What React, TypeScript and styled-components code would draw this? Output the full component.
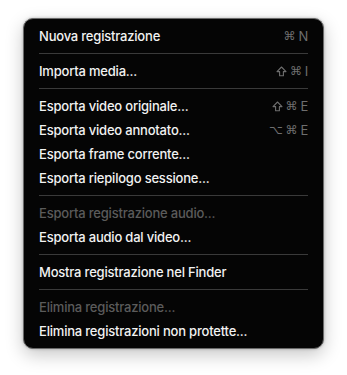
import React from "react";
import styled, { createGlobalStyle } from "styled-components";

const Global = createGlobalStyle`
  html, body { margin: 0; padding: 0; background: #ffffff; }
  body { font-family: Inter, "Noto Sans", "DejaVu Sans", sans-serif; -webkit-font-smoothing: antialiased; }
`;

const Page = styled.div`
  width: 347px;
  height: 375px;
  padding: 18px 0 0 23px;
  box-sizing: border-box;
`;

const Menu = styled.div`
  width: 301px;
  box-sizing: border-box;
  background: #050505;
  border: 1px solid #6a6a6a;
  border-radius: 10px;
  padding: 5px 0;
  box-shadow: 0 6px 18px rgba(0, 0, 0, 0.22), 0 0 3px rgba(0, 0, 0, 0.25);
  display: flex;
  flex-direction: column;
`;

const Row = styled.div<{ $disabled?: boolean }>`
  height: 24px;
  display: flex;
  align-items: center;
  justify-content: space-between;
  padding: 0 15px 0 15px;
  font-size: 13px;
  font-weight: 500;
  letter-spacing: -0.2px;
  color: ${(p) => (p.$disabled ? "#5b5b5b" : "#f2f2f2")};
`;

const Shortcut = styled.span`
  color: #6e6e6e;
  font-size: 13px;
  font-weight: 400;
  display: flex;
  gap: 3px;
  align-items: center;
`;

const Glyph = styled.span`
  font-family: "DejaVu Sans", sans-serif;
  font-size: 12px;
`;

const Sep = styled.div`
  height: 11px;
  display: flex;
  align-items: center;
  padding: 0 15px;
  &::after {
    content: "";
    flex: 1;
    height: 1px;
    background: #3a3a3a;
  }
`;

const ShiftIcon = () => (
  <svg width="11" height="11" viewBox="0 0 11 11" fill="none">
    <path
      d="M5.5 1 L10 5.6 H7.4 V9.8 H3.6 V5.6 H1 Z"
      stroke="#6e6e6e"
      strokeWidth="1.1"
      strokeLinejoin="round"
    />
  </svg>
);

type Item =
  | { sep: true }
  | { label: string; keys?: string[]; disabled?: boolean };

const items: Item[] = [
  { label: "Nuova registrazione", keys: ["⌘", "N"] },
  { sep: true },
  { label: "Importa media...", keys: ["⇧", "⌘", "I"] },
  { sep: true },
  { label: "Esporta video originale...", keys: ["⇧", "⌘", "E"] },
  { label: "Esporta video annotato...", keys: ["⌥", "⌘", "E"] },
  { label: "Esporta frame corrente..." },
  { label: "Esporta riepilogo sessione..." },
  { sep: true },
  { label: "Esporta registrazione audio...", disabled: true },
  { label: "Esporta audio dal video..." },
  { sep: true },
  { label: "Mostra registrazione nel Finder" },
  { sep: true },
  { label: "Elimina registrazione...", disabled: true },
  { label: "Elimina registrazioni non protette..." },
];

const renderKey = (k: string, j: number) => {
  if (k === "⇧") return <ShiftIcon key={j} />;
  if (k.charCodeAt(0) > 127) return <Glyph key={j}>{k}</Glyph>;
  return <span key={j}>{k}</span>;
};

export default function App() {
  return (
    <Page>
      <Global />
      <Menu>
        {items.map((it, i) =>
          "sep" in it ? (
            <Sep key={i} />
          ) : (
            <Row key={i} $disabled={it.disabled}>
              <span>{it.label}</span>
              {it.keys && <Shortcut>{it.keys.map(renderKey)}</Shortcut>}
            </Row>
          )
        )}
      </Menu>
    </Page>
  );
}
